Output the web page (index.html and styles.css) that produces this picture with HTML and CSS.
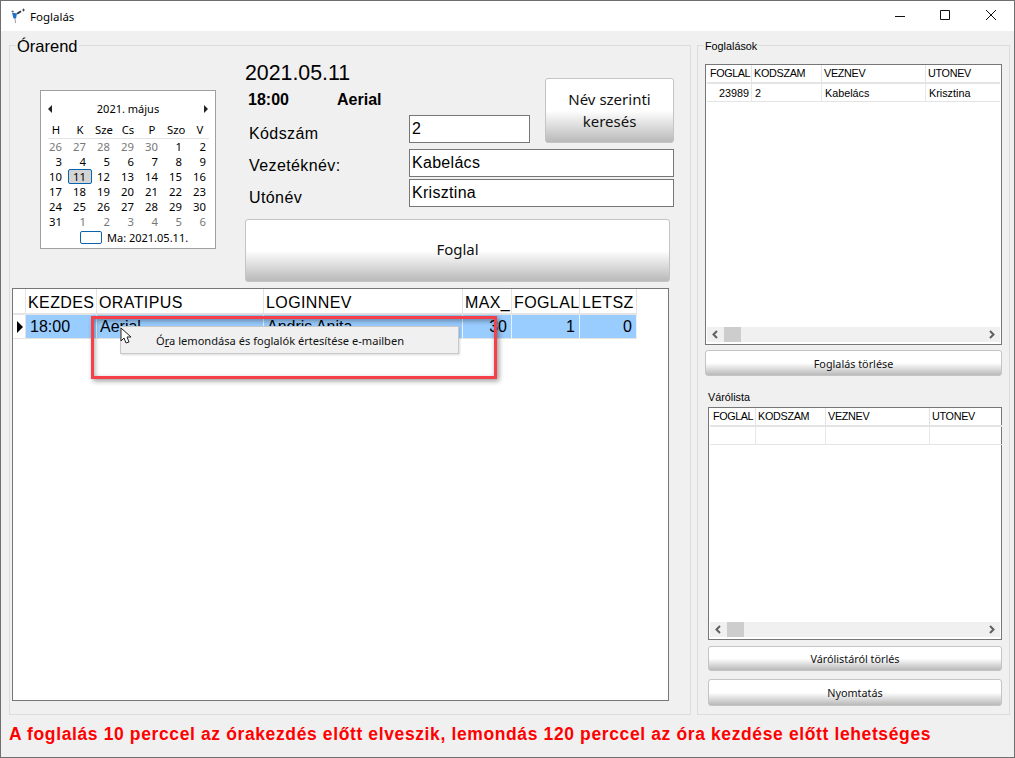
FILE: index.html
```html
<!DOCTYPE html>
<html lang="hu">
<head>
<meta charset="utf-8">
<title>Foglalás</title>
<link rel="stylesheet" href="styles.css">
</head>
<body>
<div class="window">
  <header class="titlebar">
    <svg class="appicon" width="16" height="16" viewBox="0 0 16 16"><path d="M1 3.500l2-1 1 1.500z" fill="#26323f"/><path d="M2 4.500l5 1-1 5-2.500 0z" fill="#1f6fc4"/><path d="M4.500 10.500l.5 4.500h1l-.5-4.500z" fill="#a0a0a0"/><path d="M6.500 5l4-2.500 1 1.500-4 2.500z" fill="#26323f"/><path d="M13.500 0l.5 1.500 1.500.5-1.500.5-.5 1.500-.5-1.500-1.500-.5 1.500-.5z" fill="#26323f"/></svg>
    <span class="title">Foglalás</span>
    <div class="winctl">
      <svg width="45" height="30" viewBox="0 0 45 30"><path d="M16 15.500h10" stroke="#111" fill="none"/></svg>
      <svg width="45" height="30" viewBox="0 0 45 30"><path d="M16.500 9.500h9v9h-9z" stroke="#111" fill="none"/></svg>
      <svg width="45" height="30" viewBox="0 0 45 30"><path d="M17 9l10 10M27 9l-10 10" stroke="#111" fill="none"/></svg>
    </div>
  </header>

  <main class="main">
    <section class="group group-left">
      <span class="legend legend-big">Órarend</span>
      <div class="top">
        <div class="calendar">
          <div class="cal-head">
            <span class="tri tri-l"></span>
            <span>2021. május</span>
            <span class="tri tri-r"></span>
          </div>
          <div class="cal-grid cal-week">
            <span>H</span><span>K</span><span>Sze</span><span>Cs</span><span>P</span><span>Szo</span><span>V</span>
          </div>
          <div class="cal-grid cal-days">
            <span class="off">26</span><span class="off">27</span><span class="off">28</span><span class="off">29</span><span class="off">30</span><span>1</span><span>2</span>
            <span>3</span><span>4</span><span>5</span><span>6</span><span>7</span><span>8</span><span>9</span>
            <span>10</span><span class="sel">11</span><span>12</span><span>13</span><span>14</span><span>15</span><span>16</span>
            <span>17</span><span>18</span><span>19</span><span>20</span><span>21</span><span>22</span><span>23</span>
            <span>24</span><span>25</span><span>26</span><span>27</span><span>28</span><span>29</span><span>30</span>
            <span>31</span><span class="off">1</span><span class="off">2</span><span class="off">3</span><span class="off">4</span><span class="off">5</span><span class="off">6</span>
          </div>
          <div class="cal-today"><span class="today-box"></span><span>Ma: 2021.05.11.</span></div>
        </div>

        <div class="form">
          <div class="form-upper">
            <div class="form-info">
              <div class="date">2021.05.11</div>
              <div class="slot"><span class="slot-time">18:00</span><span>Aerial</span></div>
              <div class="field"><label class="lbl lbl-1">Kódszám</label><div class="box box-short">2</div></div>
            </div>
            <button class="btn btn-name">Név szerinti<br>keresés</button>
          </div>
          <div class="field field-2"><label class="lbl lbl-2">Vezetéknév:</label><div class="box box-long">Kabelács</div></div>
          <div class="field field-3"><label class="lbl lbl-3">Utónév</label><div class="box box-long">Krisztina</div></div>
          <button class="btn btn-book">Foglal</button>
        </div>
      </div>

      <div class="datagrid">
        <table class="main-table">
          <colgroup><col class="m0"><col class="m1"><col class="m2"><col class="m3"><col class="m4"><col class="m5"><col class="m6"></colgroup>
          <thead><tr><th class="ind"></th><th>KEZDES</th><th>ORATIPUS</th><th>LOGINNEV</th><th>MAX_</th><th>FOGLAL</th><th>LETSZ</th></tr></thead>
          <tbody><tr class="active"><td class="ind"><span class="row-mark"></span></td><td class="t-time">18:00</td><td>Aerial</td><td>Andris Anita</td><td class="num">30</td><td class="num">1</td><td class="num">0</td></tr></tbody>
        </table>
        <div class="menu"><span class="menu-item">Ó<u>r</u>a lemondása és foglalók értesítése e-mailben</span></div>
        <div class="mark"></div>
        <svg class="cursor" width="14" height="19" viewBox="0 0 14 19"><path d="M1 1v13l3-3 2 5 3-1-2-5h4z" fill="#fff" stroke="#222" stroke-width="1" stroke-linejoin="round"/></svg>
      </div>
    </section>

    <section class="group group-right">
      <span class="legend legend-small">Foglalások</span>
      <div class="sidegrid sg-1">
        <table class="side-table st-1">
          <colgroup><col class="a1"><col class="a2"><col class="a3"><col class="a4"></colgroup>
          <thead><tr><th>FOGLAL</th><th>KODSZAM</th><th>VEZNEV</th><th>UTONEV</th></tr></thead>
          <tbody><tr><td class="num">23989</td><td>2</td><td>Kabelács</td><td>Krisztina</td></tr></tbody>
        </table>
        <div class="hscroll">
          <svg width="17" height="15" viewBox="0 0 17 15"><path d="M10 4l-3.500 3.500L10 11" fill="none" stroke="#606060" stroke-width="2"/></svg>
          <span class="thumb"></span><span class="track"></span>
          <svg width="17" height="15" viewBox="0 0 17 15"><path d="M7 4l3.500 3.500L7 11" fill="none" stroke="#606060" stroke-width="2"/></svg>
        </div>
      </div>
      <button class="btn btn-side btn-del">Foglalás törlése</button>

      <div class="wait-label">Várólista</div>
      <div class="sidegrid sg-2">
        <table class="side-table st-2">
          <colgroup><col class="b1"><col class="b2"><col class="b3"><col class="b4"></colgroup>
          <thead><tr><th>FOGLAL</th><th>KODSZAM</th><th>VEZNEV</th><th>UTONEV</th></tr></thead>
          <tbody><tr><td></td><td></td><td></td><td></td></tr></tbody>
        </table>
        <div class="hscroll">
          <svg width="17" height="15" viewBox="0 0 17 15"><path d="M10 4l-3.500 3.500L10 11" fill="none" stroke="#606060" stroke-width="2"/></svg>
          <span class="thumb"></span><span class="track"></span>
          <svg width="17" height="15" viewBox="0 0 17 15"><path d="M7 4l3.500 3.500L7 11" fill="none" stroke="#606060" stroke-width="2"/></svg>
        </div>
      </div>
      <button class="btn btn-side btn-wait">Várólistáról törlés</button>
      <button class="btn btn-side btn-print">Nyomtatás</button>
    </section>
  </main>

  <p class="notice">A foglalás 10 perccel az órakezdés előtt elveszik, lemondás 120 perccel az óra kezdése előtt lehetséges</p>
</div>
</body>
</html>
```

FILE: styles.css
```css
* { box-sizing: border-box; }
html, body { margin: 0; padding: 0; }
body { font-family: "Liberation Sans", Arial, sans-serif; color: #000; background: #f0f0f0; }

.window { width: 1015px; height: 758px; border: 1px solid #6f6f6f; background: #f0f0f0; overflow: hidden; }

.titlebar { height: 30px; background: #fff; display: flex; align-items: center; padding-left: 9px; }
.appicon { margin-right: 4px; }
.title { font: 11.500px "Noto Sans", sans-serif; }
.winctl { margin-left: auto; display: flex; }
.winctl svg { display: block; }

.main { display: flex; gap: 6px; padding: 14px 0 0 8px; }
.group { position: relative; height: 670px; border: 1px solid #dcdcdc; }
.group-left { width: 682px; padding-left: 2px; }
.group-right { width: 313px; padding: 18px 0 0 7px; }
.legend { position: absolute; background: #f0f0f0; padding: 0 1px; }
.legend-big { left: 6px; top: -9px; font-size: 16.500px; line-height: 18px; }
.legend-small { left: 6px; top: -6px; font-size: 10.800px; line-height: 13px; }

.top { display: flex; height: 242px; padding-left: 28px; }

.calendar { isolation: isolate; width: 176px; height: 159px; margin-top: 44px; background: #fff; border: 1px solid #a0a0a0; font: 11.300px "Noto Sans", sans-serif; }
.cal-head { height: 16px; margin: 10px 7px 0; display: flex; justify-content: space-between; align-items: center; line-height: 16px; font-size: 11px; }
.tri { width: 0; height: 0; border-top: 4px solid transparent; border-bottom: 4px solid transparent; }
.tri-l { border-right: 4px solid #222; }
.tri-r { border-left: 4px solid #222; }
.cal-grid { display: grid; grid-template-columns: repeat(7, 24px); }
.cal-week { margin: 5px 6px 0 0; height: 17px; line-height: 15px; text-align: center; position: relative; }
.cal-week span { padding-left: 6px; }
.cal-week::after { content: ""; position: absolute; left: 7px; right: 0; bottom: 0; height: 1px; background: #e4e4e4; }
.cal-days { grid-auto-rows: 15px; line-height: 15px; text-align: right; }
.cal-days span { padding-right: 3px; }
.cal-days .off { color: #777; }
.cal-days .sel { position: relative; }
.cal-days .sel::before { content: ""; position: absolute; z-index: -1; left: 3px; right: -3px; top: 0; bottom: 0; background: #d4d4d4; border: 1px solid #0a64ad; border-radius: 2px; }
.cal-today { display: flex; align-items: center; margin: 1px 0 0 39px; height: 15px; gap: 5px; font-size: 11px; }
.today-box { width: 22px; height: 13px; border: 1px solid #0a64ad; border-radius: 2px; }

.form { width: 429px; margin: 13px 0 0 29px; }
.form-upper { display: flex; justify-content: space-between; align-items: flex-start; }
.form-info { width: 285px; }
.date { height: 27px; font-size: 21.330px; line-height: 28px; }
.slot { height: 29px; padding-left: 3px; display: flex; font-size: 16px; font-weight: bold; line-height: 28px; }
.slot-time { width: 89px; }
.field { display: flex; }
.field-2 { margin-top: 6px; }
.field-3 { margin-top: 2px; }
.lbl { width: 164px; padding-left: 4px; font-size: 16px; line-height: 18px; letter-spacing: .4px; }
.lbl-1 { padding-top: 10px; }
.lbl-2 { padding-top: 8px; }
.lbl-3 { padding-top: 10px; }
.box { height: 28px; background: #fff; border: 1px solid #777; font-size: 16px; line-height: 18px; padding: 4px 0 0 2px; letter-spacing: .3px; }
.box-short { width: 121px; }
.box-long { width: 265px; }

.btn { display: block; padding: 0; border: 1px solid #c4c4c4; border-radius: 3px; color: #111; font-family: "Noto Sans", sans-serif; background: linear-gradient(to bottom, #fff 0, #fff 50%, #b9b9b9 100%); }
.btn-name { width: 129px; height: 65px; margin-top: 19px; padding-bottom: 2px; font-size: 15px; line-height: 22px; }
.btn-book { width: 425px; height: 63px; margin-top: 12px; padding-bottom: 3px; font-size: 15px; }
.btn-side { font-size: 10.800px; height: 26px; }
.btn-del { width: 297px; margin-top: 5px; }
.btn-wait { width: 294px; margin: 6px 0 0 3px; height: 25px; }
.btn-print { width: 294px; margin: 8px 0 0 3px; height: 27px; }

.datagrid { position: relative; width: 657px; height: 413px; background: #fff; border: 1px solid #777; }
table { border-collapse: separate; border-spacing: 0; table-layout: fixed; }
.main-table { width: 624px; font-size: 16px; }
.m0 { width: 13px; } .m1 { width: 71px; } .m2 { width: 167px; } .m3 { width: 199px; } .m4 { width: 49px; } .m5 { width: 68px; } .m6 { width: 57px; }
.main-table th { height: 26px; padding: 3px 0 0 2px; font-weight: normal; text-align: left; letter-spacing: .4px; white-space: nowrap; overflow: hidden; border-right: 1px solid #e4e4e4; border-bottom: 2px solid #e4e4e4; }
.main-table td { height: 24px; padding: 1px 0 0 3px; white-space: nowrap; overflow: hidden; border-right: 1px solid #e8f2fb; border-bottom: 1px solid #e4e4e4; }
.main-table .ind { padding: 0; background: #fff; border-right-color: #e4e4e4; }
.main-table .t-time { padding-left: 4px; }
.main-table td.num { text-align: right; padding: 1px 4px 0 0; }
.active td { background: #99ccff; }
.row-mark { display: block; width: 0; height: 0; margin-left: 4px; border-top: 6px solid transparent; border-bottom: 6px solid transparent; border-left: 6px solid #000; }

.menu { position: absolute; left: 107px; top: 37px; width: 339px; height: 28px; background: #f0f0f0; border: 1px solid #c9c9c9; box-shadow: 1px 1px 2px rgba(0,0,0,.15); display: flex; align-items: center; padding-left: 35px; font: 11.100px "Noto Sans", sans-serif; color: #111; }
.mark { position: absolute; left: 78px; top: 27px; width: 406px; height: 63px; border: 3px solid #f5404a; box-shadow: 2px 2px 5px rgba(0,0,0,.4), inset 1px 2px 5px rgba(0,0,0,.35); }
.cursor { position: absolute; left: 107px; top: 38px; }

.sidegrid { background: #fff; border: 1px solid #777; padding: 0 1px 2px; display: flex; flex-direction: column; justify-content: space-between; }
.sg-1 { width: 297px; height: 281px; }
.sg-2 { width: 294px; height: 233px; margin-left: 3px; }
.side-table { font-size: 10.800px; }
.st-1 { width: 293px; }
.st-2 { width: 292px; }
.a1 { width: 45px; } .a2 { width: 70px; } .a3 { width: 104px; } .a4 { width: 74px; }
.b1 { width: 46px; } .b2 { width: 70px; } .b3 { width: 104px; } .b4 { width: 72px; }
.side-table th { height: 19px; padding: 0 0 1px 2px; font-weight: normal; text-align: left; letter-spacing: -.3px; overflow: hidden; white-space: nowrap; border-right: 1px solid #e4e4e4; border-bottom: 2px solid #e4e4e4; }
.side-table th:first-child { padding-left: 3px; letter-spacing: -.4px; }
.side-table th:last-child, .side-table td:last-child { border-right: 0; }
.side-table td { height: 18px; padding: 0 0 0 3px; white-space: nowrap; border-right: 1px solid #e8e8e8; border-bottom: 1px solid #e4e4e4; }
.side-table td.num { text-align: right; padding: 0 2px 0 0; }

.hscroll { height: 15px; background: #f0f0f0; display: flex; flex: none; }
.hscroll svg { display: block; flex: none; }
.thumb { width: 17px; background: #cdcdcd; flex: none; }
.track { flex: 1; }

.wait-label { margin: 15px 0 3px 3px; font-size: 10.800px; line-height: 13px; }

.notice { margin: 9px 0 0 8px; color: #f00; font-size: 17.500px; font-weight: bold; line-height: 20px; letter-spacing: .62px; white-space: nowrap; }
```
